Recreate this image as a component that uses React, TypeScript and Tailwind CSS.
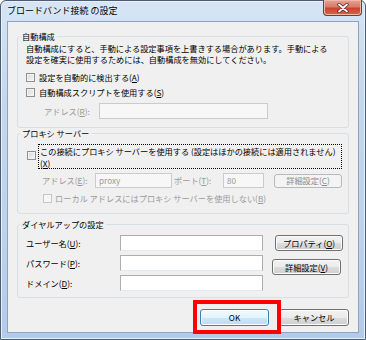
import React from 'react';
import clsx from 'clsx';

const FONT = '"Noto Sans CJK JP", "Noto Sans", sans-serif';

function Mn({ k }: { k: string }) {
  return (
    <>
      (<span className="underline underline-offset-[1px]">{k}</span>)
    </>
  );
}

function CheckBox({ disabled, className }: { disabled?: boolean; className?: string }) {
  return (
    <span
      className={clsx(
        'block w-[9px] h-[9px] shrink-0 border',
        disabled
          ? 'border-[#c6c6c6] bg-[#f6f6f6]'
          : 'border-[#8e8f8f] bg-gradient-to-br from-[#d8d8d8] to-[#f7f7f7] shadow-[inset_0_0_0_1px_#f4f4f4]',
        className
      )}
    />
  );
}

function Field({
  width,
  height = 16,
  disabled,
  value,
}: {
  width: number;
  height?: number;
  disabled?: boolean;
  value?: string;
}) {
  return (
    <span
      style={{ width, height }}
      className={clsx(
        'flex items-center shrink-0 border px-[3px] text-[8.2px]',
        disabled
          ? 'border-[#c9cbce] bg-[#f7f7f7] text-[#9a9a9a]'
          : 'border-[#abadb3] border-b-[#e3e9ef] bg-white'
      )}
    >
      {value}
    </span>
  );
}

function Button({
  children,
  disabled,
  primary,
  className,
}: {
  children: React.ReactNode;
  disabled?: boolean;
  primary?: boolean;
  className?: string;
}) {
  return (
    <button
      type="button"
      className={clsx(
        'flex items-center justify-center shrink-0 rounded-[3px] border text-[8.2px] leading-none',
        disabled
          ? 'border-[#b5b9bd] bg-[#f4f4f4] text-[#8b8b8b]'
          : primary
            ? 'border-[#3c7fb1] bg-[linear-gradient(#f2f9fe_0%,#e4f3fc_50%,#cbe8fa_50%,#b9def6_100%)] shadow-[inset_0_0_0_1px_#ffffff]'
            : 'border-[#707070] bg-[linear-gradient(#f2f2f2_0%,#ebebeb_50%,#dddddd_50%,#cfcfcf_100%)] shadow-[inset_0_0_0_1px_#fcfcfc]',
        className
      )}
    >
      {children}
    </button>
  );
}

function Group({
  title,
  className,
  children,
}: {
  title: string;
  className?: string;
  children: React.ReactNode;
}) {
  return (
    <fieldset
      className={clsx('m-0 p-0 min-w-0 border border-[#d5dfe5] rounded-[3px]', className)}
    >
      <legend className="ml-[2px] px-[2px] text-[8.2px] leading-[11px]">{title}</legend>
      {children}
    </fieldset>
  );
}

function CloseButton() {
  return (
    <div className="w-[39px] h-[16px] -mr-[3px] -mt-[1px] rounded-b-[4px] border border-t-0 border-[#7a3a33] bg-[linear-gradient(#e8a193_0%,#d97b68_45%,#c74533_55%,#d5654c_100%)] shadow-[inset_0_0_0_1px_#f0b8aa] flex items-center justify-center">
      <svg width="12" height="10" viewBox="0 0 12 10" aria-hidden="true">
        <path d="M2 1.5 L10 8.5 M10 1.5 L2 8.5" stroke="#5a2a24" strokeWidth="3.4" strokeLinecap="round" />
        <path d="M2 1.5 L10 8.5 M10 1.5 L2 8.5" stroke="#ffffff" strokeWidth="1.8" strokeLinecap="round" />
      </svg>
    </div>
  );
}

export default function App() {
  return (
    <div className="relative w-[366px] h-[340px] bg-white overflow-hidden text-black" style={{ fontFamily: FONT }}>
      {/* Window frame */}
      <div className="h-full flex flex-col rounded-t-[6px] border border-[#4b5d74] bg-[linear-gradient(#d6e4f5_0%,#c3d7ef_30%,#bcd2ee_70%,#b2cbeb_100%)] shadow-[inset_0_0_0_1px_#e8f0fa] px-[6px] pb-[6px]">
        {/* Title bar */}
        <div className="h-[20px] flex items-start justify-between shrink-0">
          <span className="pt-[4px] text-[9px] leading-[11px] whitespace-nowrap [text-shadow:0_0_6px_#ffffff]">
            ブロードバンド接続 の設定
          </span>
          <CloseButton />
        </div>

        {/* Client area */}
        <div className="flex-1 flex flex-col border border-[#8ea3bd] bg-[#f0f0f0] pt-[9px] px-[9px]">
          {/* 自動構成 */}
          <Group title="自動構成" className="h-[97px]">
            <div className="pl-[8px] pt-[1px] text-[8.2px]">
              <p className="leading-[11px] whitespace-nowrap">
                自動構成にすると、手動による設定事項を上書きする場合があります。手動による
                <br />
                設定を確実に使用するためには、自動構成を無効にしてください。
              </p>
              <div className="mt-[7px] h-[11px] flex items-center gap-[4px] whitespace-nowrap">
                <CheckBox />
                <span>
                  設定を自動的に検出する<Mn k="A" />
                </span>
              </div>
              <div className="mt-[4px] h-[11px] flex items-center gap-[4px] whitespace-nowrap">
                <CheckBox />
                <span>
                  自動構成スクリプトを使用する<Mn k="S" />
                </span>
              </div>
              <div className="mt-[5px] h-[16px] flex items-center">
                <span className="ml-[18px] w-[55px] text-[#9a9a9a] whitespace-nowrap">
                  アドレス<Mn k="R" />:
                </span>
                <Field width={169} disabled />
              </div>
            </div>
          </Group>

          {/* プロキシ サーバー */}
          <Group title="プロキシ サーバー" className="h-[86px]">
            <div className="pl-[9px] pt-[5px] text-[8.2px]">
              <div className="flex items-start">
                <CheckBox className="mt-[7px]" />
                <div className="ml-[2px] w-[304px] h-[25px] border border-dotted border-black px-[1px] leading-[12px] whitespace-nowrap">
                  この接続にプロキシ サーバーを使用する (設定はほかの接続には適用されません)
                  <br />
                  <Mn k="X" />
                </div>
              </div>
              <div className="mt-[4px] h-[15px] flex items-center text-[#9a9a9a] whitespace-nowrap">
                <span className="ml-[15px] w-[53px]">
                  アドレス<Mn k="E" />:
                </span>
                <Field width={77} height={15} disabled value="proxy" />
                <span className="ml-[2px] w-[49px]">
                  ポート<Mn k="T" />:
                </span>
                <Field width={41} height={15} disabled value="80" />
                <Button disabled className="ml-[10px] w-[68px] h-[14px]">
                  詳細設定<Mn k="C" />
                </Button>
              </div>
              <div className="mt-[4px] h-[12px] flex items-center gap-[3px] whitespace-nowrap text-[#9a9a9a]">
                <CheckBox disabled className="ml-[16px]" />
                <span>
                  ローカル アドレスにはプロキシ サーバーを使用しない<Mn k="B" />
                </span>
              </div>
            </div>
          </Group>

          {/* ダイヤルアップの設定 */}
          <Group title="ダイヤルアップの設定" className="mt-[5px] h-[79px]">
            <div className="pl-[8px] pt-[5px] text-[8.2px] flex flex-col gap-[4px]">
              <div className="h-[16px] flex items-center whitespace-nowrap">
                <span className="w-[94px]">
                  ユーザー名<Mn k="U" />:
                </span>
                <Field width={143} />
                <Button className="ml-[12px] w-[68px] h-[16px]">
                  プロパティ<Mn k="O" />
                </Button>
              </div>
              <div className="h-[16px] flex items-start whitespace-nowrap">
                <span className="w-[94px] h-[16px] flex items-center">
                  パスワード<Mn k="P" />:
                </span>
                <Field width={143} />
                <Button className="ml-[9px] mt-[4px] w-[69px] h-[16px]">
                  詳細設定<Mn k="V" />
                </Button>
              </div>
              <div className="h-[16px] flex items-center whitespace-nowrap">
                <span className="w-[94px]">
                  ドメイン<Mn k="D" />:
                </span>
                <Field width={143} />
              </div>
            </div>
          </Group>

          {/* OK / Cancel */}
          <div className="mt-[11px] flex justify-end gap-[10px]">
            <Button primary className="w-[69px] h-[17px]">
              OK
            </Button>
            <Button className="w-[70px] h-[17px]">キャンセル</Button>
          </div>
        </div>
      </div>

      {/* Red highlight annotation around OK */}
      <div className="absolute left-[193px] top-[300px] w-[88px] h-[34px] border-[4px] border-[#ff0000]" />
    </div>
  );
}
